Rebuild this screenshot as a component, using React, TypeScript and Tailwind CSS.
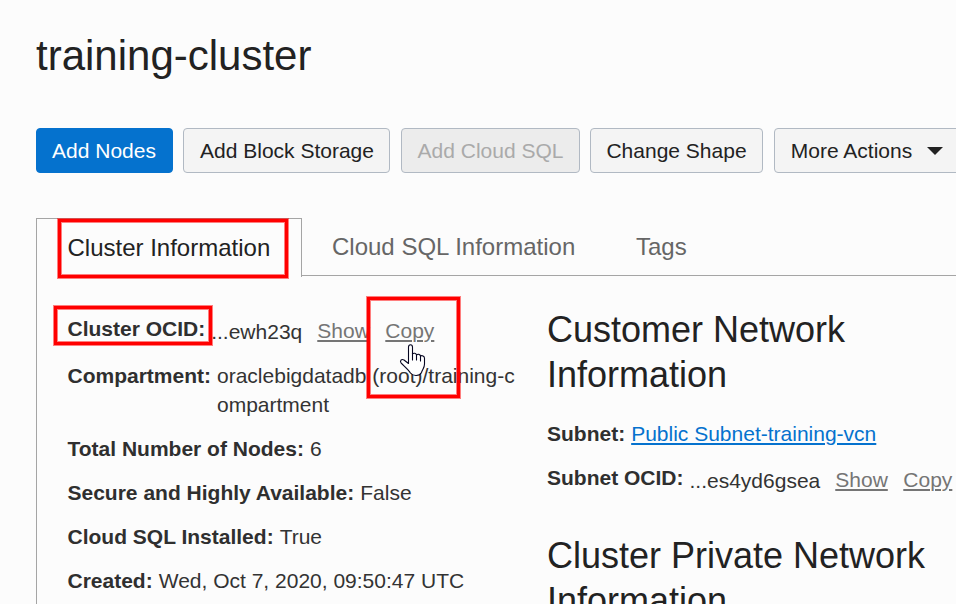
import React from "react";

const Field = ({ label, children }: { label: string; children: React.ReactNode }) => (
  <div className="mb-[15px] flex leading-[29px] whitespace-nowrap">
    <dt className="mr-[6px] font-bold text-[#2f2f2f]">{label}</dt>
    <dd>{children}</dd>
  </div>
);

const TextLink = ({ children }: { children: React.ReactNode }) => (
  <a className="text-[#757575] underline decoration-2 underline-offset-[2px]">{children}</a>
);

const Ocid = ({ label, value, className }: { label: string; value: string; className: string }) => (
  <div className={`flex h-8 leading-[29px] whitespace-nowrap ${className}`}>
    <dt className="font-bold text-[#2f2f2f]">{label}</dt>
    <dd className="flex gap-[15px] pl-[6px]">
      <span className="pt-[3px]">{value}</span>
      <span className="flex gap-[15.5px] pt-[2px]">
        <TextLink>Show</TextLink>
        <TextLink>Copy</TextLink>
      </span>
    </dd>
  </div>
);

const button = "flex h-[45px] shrink-0 items-center justify-center rounded-[4px] border whitespace-nowrap";
const plain = "border-[#b1b9c3] bg-[#f4f4f4] text-[#222]";
const highlight = "absolute border-3 border-[#f00] shadow-[0_0_0_1px_rgba(255,0,0,0.5),inset_0_0_0_1px_rgba(255,0,0,0.5)]";

export default function App() {
  return (
    <div className="relative h-[604px] w-[956px] overflow-hidden bg-[#fcfcfc] pl-9 font-['Liberation_Sans',Arial,sans-serif] text-[21px] text-[#333]">
      <h1 className="pt-8 text-[42px] leading-[48px] text-[#222]">training-cluster</h1>

      <div className="mt-12 flex">
        <button className={`${button} mr-[10px] w-[137px] border-[#0572ce] bg-[#0572ce] pr-px text-white`}>Add Nodes</button>
        <button className={`${button} ${plain} mr-[11px] w-[207px] pl-px`}>Add Block Storage</button>
        <button className={`${button} mr-[10px] w-[179px] border-[#b1b9c3] bg-[#ececec] text-[#aaa]`}>Add Cloud SQL</button>
        <button className={`${button} ${plain} mr-[11px] w-[173px]`}>Change Shape</button>
        <button className={`${button} ${plain} w-[190px] gap-[14.5px] pr-[4.5px]`}>
          More Actions
          <svg width="16" height="8" viewBox="0 0 16 8"><path d="M0 0H16L8 8Z" fill="#222" /></svg>
        </button>
      </div>

      <div className="mt-[45px] flex text-[24px]">
        <div className="h-[59px] w-[266px] border-t border-l border-r border-[#a5a5a5] pt-[14px] pl-[30.5px] leading-[30px] text-[#222]">Cluster Information</div>
        <div className="flex h-[58px] flex-1 border-b border-[#a5a5a5] pt-[14px] pl-[30px] leading-[30px] text-[#666]">
          <span className="w-[304px]">Cloud SQL Information</span>
          <span>Tags</span>
        </div>
      </div>

      <div className="flex h-[330px] border-l border-[#a5a5a5] pl-[30.5px]">
        <dl className="w-[479.5px] shrink-0 pt-[37px]">
          <Ocid label="Cluster OCID:" value="...ewh23q" className="mb-[15px]" />
          <Field label="Compartment:">oraclebigdatadb (root)/training-c<br />ompartment</Field>
          <Field label="Total Number of Nodes:">6</Field>
          <Field label="Secure and Highly Available:">False</Field>
          <Field label="Cloud SQL Installed:">True</Field>
          <Field label="Created:">Wed, Oct 7, 2020, 09:50:47 UTC</Field>
        </dl>
        <div className="w-[420px] shrink-0 pt-[30px]">
          <h2 className="mb-[22px] text-[36px] leading-[45px] text-[#222]">Customer Network<br />Information</h2>
          <dl>
            <Field label="Subnet:">
              <a className="text-[#0572ce] underline decoration-2 underline-offset-[2px]">Public Subnet-training-vcn</a>
            </Field>
            <Ocid label="Subnet OCID:" value="...es4yd6gsea" className="mb-[38px]" />
          </dl>
          <h2 className="text-[36px] leading-[45px] text-[#222]">Cluster Private Network<br />Information</h2>
        </div>
      </div>

      <div className={`${highlight} top-[219px] left-[58px] h-[59px] w-[230px]`} />
      <div className={`${highlight} top-[306px] left-[54px] h-[39px] w-[158px]`} />
      <div className={`${highlight} top-[297px] left-[367px] h-[101px] w-[93px]`} />
      <svg className="absolute top-[343px] left-[398px]" width="30" height="35" viewBox="0 0 30 35">
        <path d="M10.5 20.5V4.2C10.5 .9 14.5 .9 14.5 4.2V11C15.5 9.8 18.2 10 18.5 12C19.8 10.8 22.2 11.2 22.5 13C24 12.2 26.5 13 26.5 15.2V21C26.5 25 24.5 26 23.5 29.5C21.5 33.4 15 33.4 12.5 30C10 26.2 6.5 23.5 3.2 20.2C1.4 17.8 3.5 15.5 6 17Z" fill="white" stroke="#050520" strokeWidth="1.1" strokeLinejoin="round" />
        <path d="M14.5 10V17M18.5 12V17M22.5 13V18" fill="none" stroke="#050520" strokeWidth="1.1" strokeLinecap="round" />
      </svg>
    </div>
  );
}
